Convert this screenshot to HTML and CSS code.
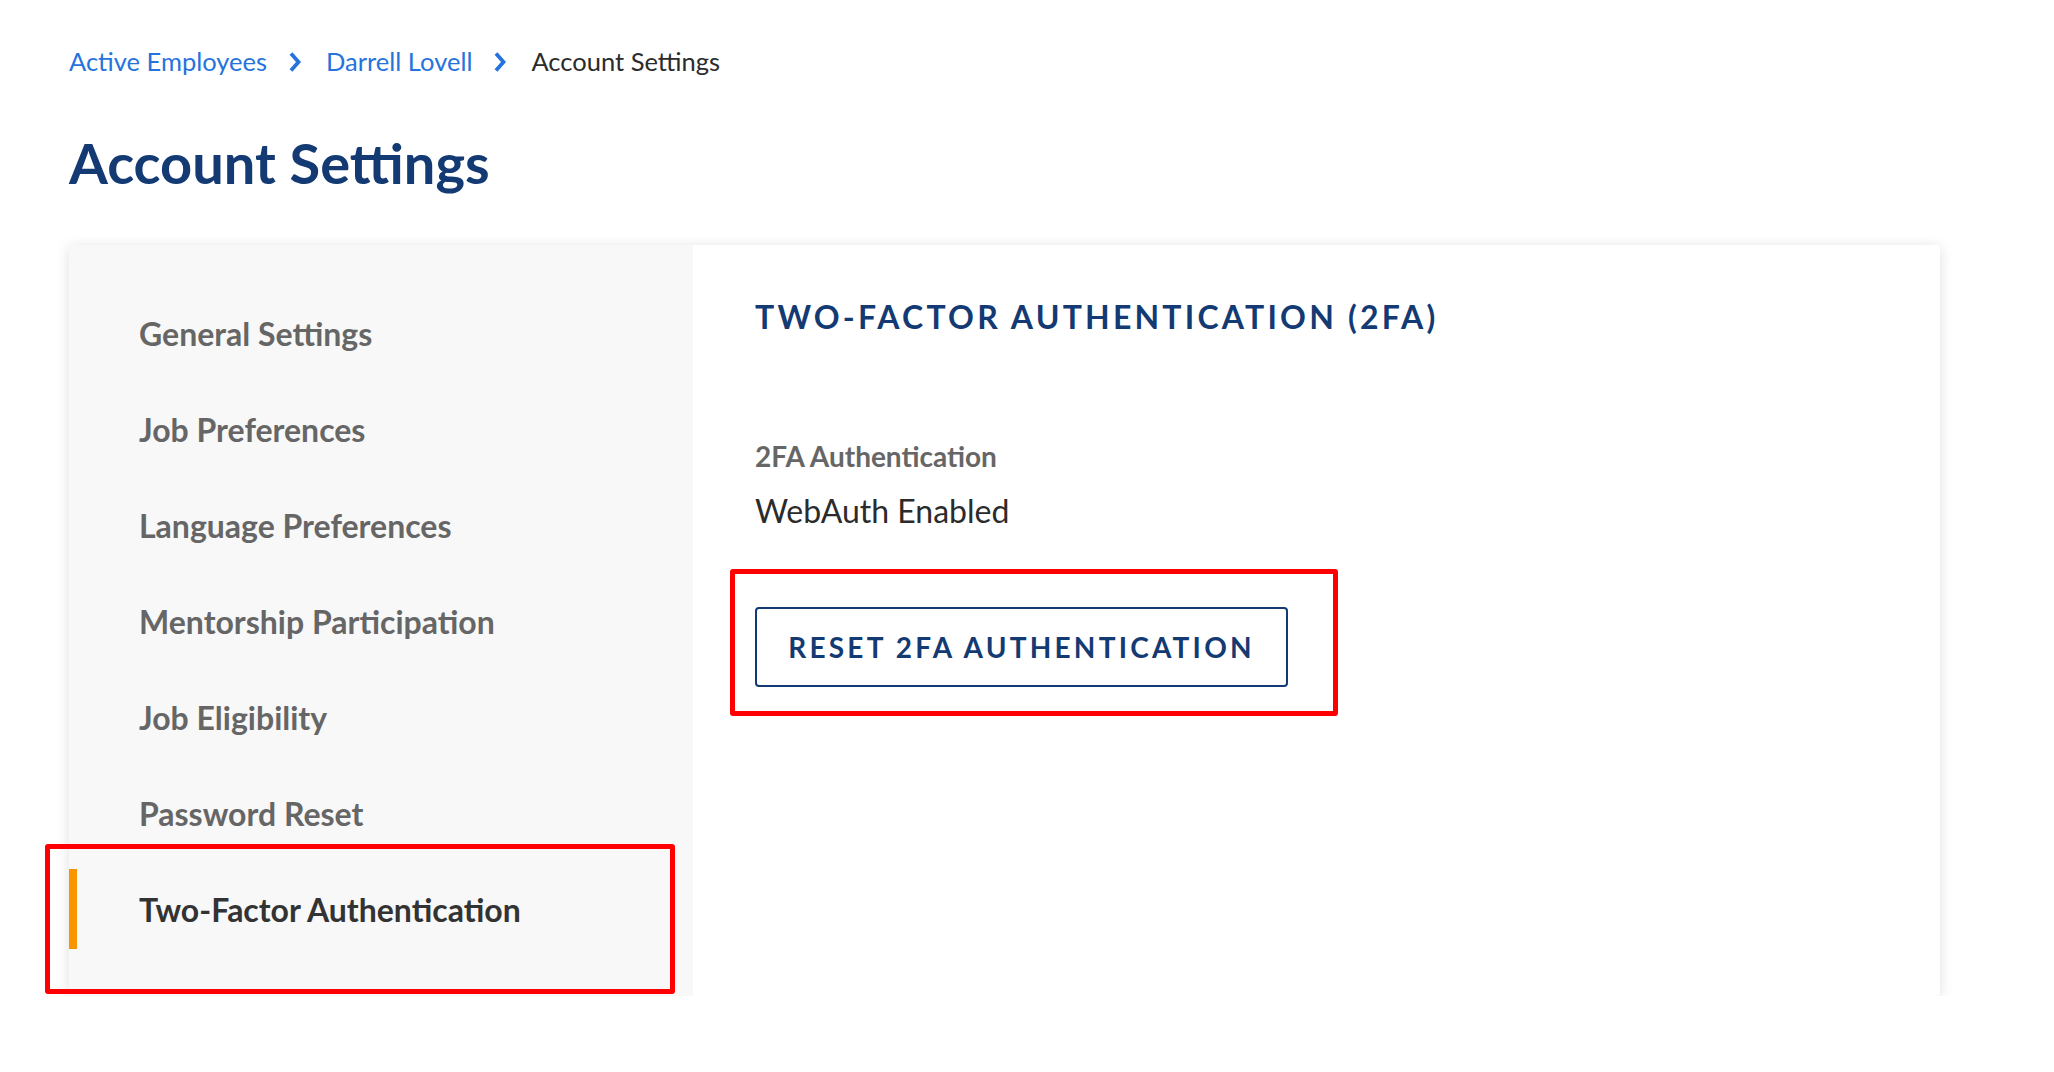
FILE: index.html
```html
<!DOCTYPE html>
<html lang="en">
<head>
<meta charset="utf-8">
<title>Account Settings</title>
<link rel="stylesheet" href="styles.css">
</head>
<body>
<div class="page">
  <nav class="breadcrumb">
    <a class="crumb-link" href="#">Active Employees</a>
    <svg class="chev" viewBox="0 0 14 22" width="14" height="22"><polyline points="3,2.5 10.5,11 3,19.5" fill="none" stroke="#2673dd" stroke-width="3.8" stroke-linecap="butt" stroke-linejoin="miter"/></svg>
    <a class="crumb-link" href="#">Darrell Lovell</a>
    <svg class="chev" viewBox="0 0 14 22" width="14" height="22"><polyline points="3,2.5 10.5,11 3,19.5" fill="none" stroke="#2673dd" stroke-width="3.8" stroke-linecap="butt" stroke-linejoin="miter"/></svg>
    <span class="crumb-current">Account Settings</span>
  </nav>
  <h1 class="title">Account Settings</h1>
  <div class="card">
    <aside class="sidebar">
      <div class="nav-item">General Settings</div>
      <div class="nav-item">Job Preferences</div>
      <div class="nav-item">Language Preferences</div>
      <div class="nav-item">Mentorship Participation</div>
      <div class="nav-item">Job Eligibility</div>
      <div class="nav-item">Password Reset</div>
      <div class="nav-item active">Two-Factor Authentication</div>
    </aside>
    <section class="content">
      <h2 class="section-title">TWO-FACTOR AUTHENTICATION (2FA)</h2>
      <div class="field">
        <div class="field-label">2FA Authentication</div>
        <div class="field-value">WebAuth Enabled</div>
      </div>
      <div class="btn-wrap">
        <button class="btn-outline">RESET 2FA AUTHENTICATION</button>
      </div>
    </section>
  </div>
</div>
</body>
</html>
```
FILE: styles.css
```css
html, body {
  margin: 0;
  padding: 0;
  background: #ffffff;
}
body {
  font-family: Lato, "Open Sans", "Liberation Sans", sans-serif;
  color: #333333;
}
.page {
  padding: 44px 0 0 69px;
  width: 1871px;
}
.breadcrumb {
  display: flex;
  align-items: center;
  height: 33px;
  font-size: 25.5px;
}
.crumb-link {
  color: #2673dd;
  text-decoration: none;
}
.chev {
  margin: 3px 24px 0 21px;
}
.crumb-current {
  color: #2b2b2b;
}
.title {
  margin: 52px 0 49px 0;
  font-size: 56px;
  line-height: 67px;
  font-weight: 700;
  color: #143a73;
}
.card {
  display: flex;
  width: 1871px;
  height: 751px;
  background: #ffffff;
  border-radius: 4px;
  box-shadow: 0 2px 14px rgba(0, 0, 0, 0.13);
}
.sidebar {
  width: 624px;
  flex: none;
  background: #f8f8f8;
  padding: 40px 0 0 0;
  box-sizing: border-box;
  border-radius: 4px 0 0 4px;
}
.nav-item {
  position: relative;
  height: 96px;
  display: flex;
  align-items: center;
  padding-left: 70px;
  font-size: 32px;
  font-weight: 700;
  color: #666666;
}
.nav-item.active {
  color: #333333;
}
.nav-item.active::before {
  content: "";
  position: absolute;
  left: 0;
  top: 8px;
  width: 8px;
  height: 80px;
  background: #f99500;
}
.nav-item.active::after {
  content: "";
  position: absolute;
  left: -24px;
  right: 18px;
  top: -17px;
  bottom: -37px;
  border: 5px solid #ff0000;
  border-radius: 3px;
}
.content {
  flex: 1;
  padding: 53px 0 0 62px;
}
.section-title {
  margin: 0;
  font-size: 32px;
  line-height: 38px;
  font-weight: 700;
  letter-spacing: 0.1em;
  color: #143a73;
}
.field {
  margin-top: 103px;
}
.field-label {
  font-size: 28px;
  line-height: 34px;
  font-weight: 700;
  color: #666666;
}
.field-value {
  margin-top: 19px;
  font-size: 32px;
  line-height: 38px;
  color: #2b2b2b;
}
.btn-wrap {
  position: relative;
  margin-top: 77px;
  display: inline-block;
}
.btn-wrap::after {
  content: "";
  position: absolute;
  left: -25px;
  right: -50px;
  top: -38px;
  bottom: -29px;
  border: 5px solid #ff0000;
  border-radius: 3px;
}
.btn-outline {
  display: block;
  width: 533px;
  height: 80px;
  background: #ffffff;
  border: 2px solid #143a73;
  border-radius: 4px;
  font-family: Lato, "Open Sans", "Liberation Sans", sans-serif;
  font-size: 28px;
  font-weight: 700;
  letter-spacing: 0.115em;
  color: #143a73;
  padding: 0;
}
```
